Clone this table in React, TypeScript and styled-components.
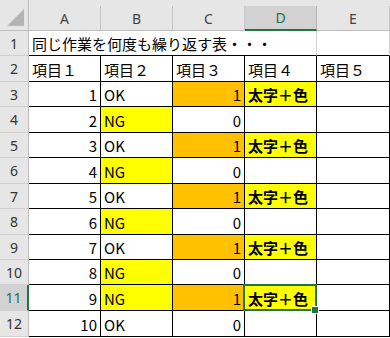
import React from 'react';
import styled, { createGlobalStyle, css } from 'styled-components';

const GREEN = '#217346';
const YELLOW = '#ffff00';
const ORANGE = '#ffc000';

const GlobalStyle = createGlobalStyle`
  html, body {
    margin: 0;
    padding: 0;
    background: #fff;
  }
  body {
    font-family: "Noto Sans CJK JP", "Noto Sans", sans-serif;
    color: #000;
  }
`;

// heights of header row and rows 1..12
const ROW_HEIGHTS = [31, 25, 26, 25, 26, 25, 26, 25, 26, 25, 25, 26, 26];

const Sheet = styled.div<{ $rows: string }>`
  display: grid;
  grid-template-columns: 29px repeat(4, 72px) 73px;
  grid-template-rows: ${({ $rows }) => $rows};
  width: 390px;
  background: #fff;
`;

const Corner = styled.div`
  background: #e6e6e6;
  display: flex;
  align-items: flex-end;
  justify-content: flex-end;
  padding: 0 3px 3px 0;
  box-sizing: border-box;
  border-right: 1px solid #bdbdbd;
  border-bottom: 1px solid #bdbdbd;
`;

const ColHeader = styled.div`
  background: #e6e6e6;
  padding-top: 6px;
  box-sizing: border-box;
  display: flex;
`;

const ColLabel = styled.div<{ $active?: boolean }>`
  flex: 1;
  display: flex;
  align-items: center;
  justify-content: center;
  font-family: "Noto Sans", "Liberation Sans", sans-serif;
  font-size: 14px;
  color: #444;
  border-right: 1px solid #c6c6c6;
  border-bottom: 1px solid #bdbdbd;
  ${({ $active }) =>
    $active &&
    css`
      background: #d2d2d2;
      color: ${GREEN};
      border-bottom: 2px solid ${GREEN};
      border-right-color: #b4b4b4;
    `}
`;

const RowHeader = styled.div<{ $active?: boolean }>`
  background: ${({ $active }) => ($active ? '#d2d2d2' : '#e6e6e6')};
  color: ${({ $active }) => ($active ? GREEN : '#333')};
  font-family: "Noto Sans", "Liberation Sans", sans-serif;
  font-size: 14px;
  display: flex;
  align-items: center;
  justify-content: center;
  box-sizing: border-box;
  border-right: ${({ $active }) => ($active ? `2px solid ${GREEN}` : '1px solid #bdbdbd')};
  border-bottom: 1px solid #d0d0d0;
`;

const Cell = styled.div<{
  $fill?: string;
  $align?: 'left' | 'right';
  $bold?: boolean;
  $ruled?: boolean;
  $underline?: boolean;
  $span?: number;
  $selected?: boolean;
}>`
  position: relative;
  box-sizing: border-box;
  display: flex;
  align-items: center;
  justify-content: ${({ $align }) => ($align === 'right' ? 'flex-end' : 'flex-start')};
  padding: 1px 3px 0 3px;
  font-size: 15px;
  line-height: 1;
  white-space: nowrap;
  overflow: visible;
  font-weight: ${({ $bold }) => ($bold ? 700 : 400)};
  background: ${({ $fill }) => $fill || '#fff'};
  border-right: 1px solid ${({ $ruled }) => ($ruled ? '#000' : '#d4d4d4')};
  border-bottom: 1px solid ${({ $underline }) => ($underline ? '#000' : '#d4d4d4')};
  grid-column: span ${({ $span }) => $span || 1};
  z-index: ${({ $selected }) => ($selected ? 2 : 'auto')};
`;

const SelectionFrame = styled.div`
  position: absolute;
  top: -1px;
  left: -2px;
  right: -1px;
  bottom: -1px;
  border: 2px solid ${GREEN};
  pointer-events: none;
`;

const FillHandle = styled.div`
  position: absolute;
  right: -4px;
  bottom: -5px;
  width: 6px;
  height: 6px;
  background: ${GREEN};
  border: 1px solid #fff;
`;

type Row = {
  no: number;
  result: 'OK' | 'NG';
  flag: 0 | 1;
};

const rows: Row[] = [
  { no: 1, result: 'OK', flag: 1 },
  { no: 2, result: 'NG', flag: 0 },
  { no: 3, result: 'OK', flag: 1 },
  { no: 4, result: 'NG', flag: 0 },
  { no: 5, result: 'OK', flag: 1 },
  { no: 6, result: 'NG', flag: 0 },
  { no: 7, result: 'OK', flag: 1 },
  { no: 8, result: 'NG', flag: 0 },
  { no: 9, result: 'NG', flag: 1 },
  { no: 10, result: 'OK', flag: 0 },
];

const COLUMNS = ['A', 'B', 'C', 'D', 'E'];
const ACTIVE_COL = 'D';
const ACTIVE_ROW = 11;

const CornerMark = () => (
  <svg width="18" height="18" viewBox="0 0 18 18">
    <polygon points="17,0 17,17 0,17" fill="#b4b4b4" />
  </svg>
);

const App = () => {
  return (
    <>
      <GlobalStyle />
      <Sheet $rows={ROW_HEIGHTS.map((h) => `${h}px`).join(' ')}>
        <Corner>
          <CornerMark />
        </Corner>
        {COLUMNS.map((c) => (
          <ColHeader key={c}>
            <ColLabel $active={c === ACTIVE_COL}>{c}</ColLabel>
          </ColHeader>
        ))}

        <RowHeader>1</RowHeader>
        <Cell $span={4} $underline>
          同じ作業を何度も繰り返す表・・・
        </Cell>
        <Cell $underline />

        <RowHeader>2</RowHeader>
        {['項目１', '項目２', '項目３', '項目４', '項目５'].map((t) => (
          <Cell key={t} $ruled $underline>
            {t}
          </Cell>
        ))}

        {rows.map((r, i) => {
          const rowNo = i + 3;
          const active = rowNo === ACTIVE_ROW;
          return (
            <React.Fragment key={rowNo}>
              <RowHeader $active={active}>{rowNo}</RowHeader>
              <Cell $align="right" $ruled $underline>
                {r.no}
              </Cell>
              <Cell $ruled $underline $fill={r.result === 'NG' ? YELLOW : undefined}>
                {r.result}
              </Cell>
              <Cell $align="right" $ruled $underline $fill={r.flag ? ORANGE : undefined}>
                {r.flag}
              </Cell>
              <Cell $ruled $underline $bold $fill={r.flag ? YELLOW : undefined} $selected={active}>
                {r.flag ? '太字＋色' : ''}
                {active && (
                  <SelectionFrame>
                    <FillHandle />
                  </SelectionFrame>
                )}
              </Cell>
              <Cell $ruled $underline />
            </React.Fragment>
          );
        })}
      </Sheet>
    </>
  );
};

export default App;
